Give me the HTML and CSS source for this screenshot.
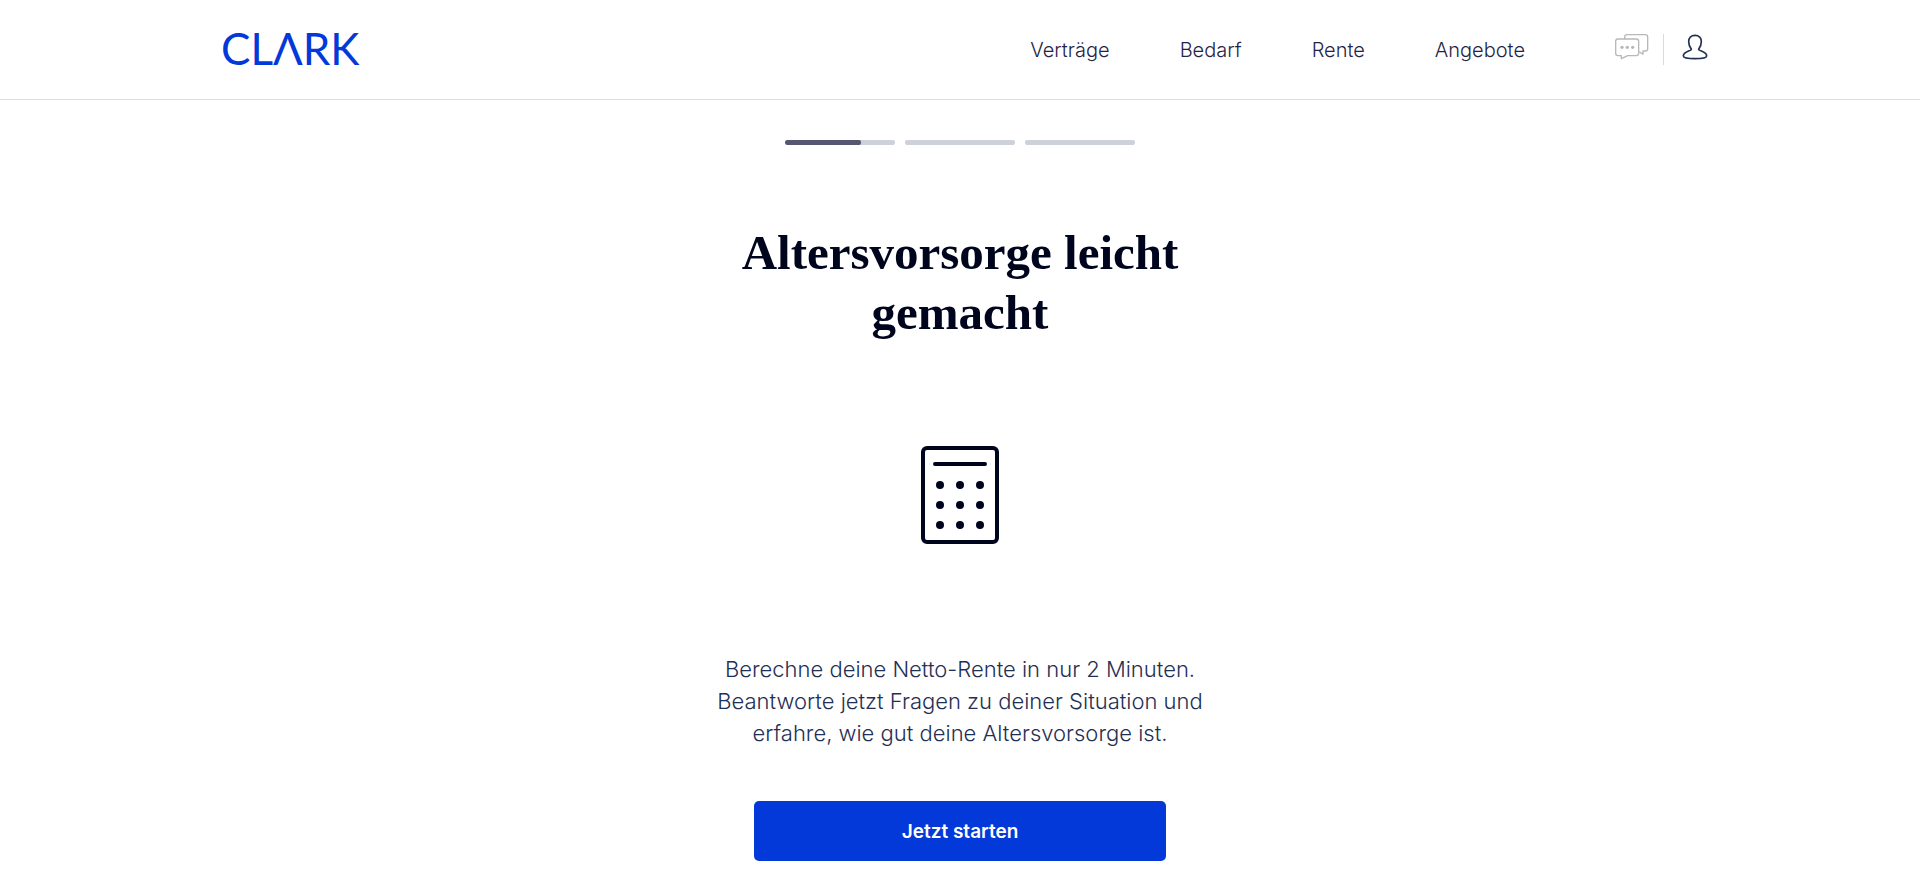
FILE: index.html
```html
<!DOCTYPE html>
<html lang="de">
<head>
<meta charset="utf-8">
<meta name="viewport" content="width=device-width, initial-scale=1">
<title>Altersvorsorge leicht gemacht</title>
<link rel="stylesheet" href="styles.css">
</head>
<body>
<header class="header">
  <div class="header-inner">
    <a class="logo" href="#" aria-label="Clark">CLΛRK</a>
    <nav class="nav">
      <a href="#">Verträge</a>
      <a href="#">Bedarf</a>
      <a href="#">Rente</a>
      <a href="#">Angebote</a>
    </nav>
    <div class="actions">
      <button class="icon-button chat" type="button" aria-label="Chat">
        <svg width="34" height="26" viewBox="0 0 102 78" fill="none" stroke="#b8b8b8" stroke-width="4" stroke-linejoin="round">
          <path d="M29 15V9Q29 2 36 2H91Q98 2 98 9V44Q98 51 91 51H84V61L73 53"/>
          <path d="M9 15H64Q71 15 71 22V58Q71 65 64 65H38L19 74V65H9Q2 65 2 58V22Q2 15 9 15Z"/>
          <g fill="#b8b8b8" stroke="none"><circle cx="21" cy="40" r="5"/><circle cx="37" cy="40" r="5"/><circle cx="53" cy="40" r="5"/></g>
        </svg>
      </button>
      <button class="icon-button user" type="button" aria-label="Konto">
        <svg width="26" height="26" viewBox="0 0 78 78" fill="none" stroke="#1f3054" stroke-width="5" stroke-linejoin="round">
          <path d="M39 4C27 4 20 12 20 23C20 34 24 40 28 46C27 52 4 51 4 66C4 71 19 74 39 74C59 74 74 71 74 66C74 51 51 52 50 46C54 40 58 34 58 23C58 12 51 4 39 4Z"/>
        </svg>
      </button>
    </div>
  </div>
</header>
<main class="main">
  <div class="progress" role="progressbar" aria-label="Fortschritt" aria-valuemin="0" aria-valuemax="100" aria-valuenow="23">
    <div class="step"><div class="step-fill" style="width:69%"></div></div>
    <div class="step"></div>
    <div class="step"></div>
  </div>
  <h1 class="title">Altersvorsorge leicht gemacht</h1>
  <svg class="calculator" width="80" height="100" viewBox="0 0 80 100" fill="#00051e" aria-hidden="true">
    <rect x="3" y="3" width="74" height="94" rx="4" fill="none" stroke="#00051e" stroke-width="4"/>
    <path d="M15 19H65" stroke="#00051e" stroke-width="4" stroke-linecap="round"/>
    <circle cx="20" cy="40" r="4"/><circle cx="40" cy="40" r="4"/><circle cx="60" cy="40" r="4"/>
    <circle cx="20" cy="60" r="4"/><circle cx="40" cy="60" r="4"/><circle cx="60" cy="60" r="4"/>
    <circle cx="20" cy="80" r="4"/><circle cx="40" cy="80" r="4"/><circle cx="60" cy="80" r="4"/>
  </svg>
  <p class="intro">Berechne deine Netto-Rente in nur 2 Minuten. Beantworte jetzt Fragen zu deiner Situation und erfahre, wie gut deine Altersvorsorge ist.</p>
  <button class="start" type="button">Jetzt starten</button>
</main>
</body>
</html>
```
FILE: styles.css
```css
* {
  box-sizing: border-box;
}

body {
  margin: 0;
  background: #fff;
  color: #1f3054;
  font-family: Inter, "Open Sans", sans-serif;
}

.header {
  border-bottom: 1px solid #dcdce6;
}

.header-inner {
  display: flex;
  align-items: center;
  max-width: 1520px;
  min-height: 99px;
  margin: 0 auto;
  padding: 0 12px 0 20px;
}

.logo {
  margin-right: auto;
  padding: 0 0 4px 1px;
  color: #0439d9;
  font-family: Lato, sans-serif;
  font-size: 44px;
  line-height: 48px;
  text-decoration: none;
}

.nav {
  display: flex;
  gap: 70px;
  margin-right: 90px;
}

.nav a {
  color: #1f2547;
  font-size: 20px;
  font-weight: 300;
  line-height: 24px;
  text-decoration: none;
}

.actions {
  display: flex;
  align-items: center;
}

.icon-button {
  display: flex;
  align-items: flex-start;
  height: 31px;
  padding: 0;
  border: 0;
  background: none;
  cursor: pointer;
}

.chat {
  padding-right: 14px;
}

.user {
  padding-left: 18px;
  border-left: 1px solid #d3daea;
}

.main {
  display: flex;
  flex-direction: column;
  align-items: center;
  padding: 40px 20px 26px;
}

.progress {
  display: flex;
  gap: 10px;
  width: 100%;
  max-width: 350px;
}

.step {
  flex: 1;
  height: 5px;
  border-radius: 2px;
  background: #cdd2da;
  overflow: hidden;
}

.step-fill {
  height: 100%;
  border-radius: 2px;
  background: #55566f;
}

.title {
  max-width: 500px;
  margin: 78px 0 102px;
  color: #00051e;
  font-family: "Liberation Serif", serif;
  font-size: 49px;
  font-weight: 700;
  line-height: 60px;
  text-align: center;
}

.intro {
  max-width: 512px;
  margin: 108px 0 52px;
  font-size: 22px;
  font-weight: 300;
  line-height: 32px;
  text-align: center;
}

.start {
  width: 100%;
  max-width: 412px;
  height: 60px;
  border: 0;
  border-radius: 5px;
  background: #0439d9;
  color: #fff;
  font-family: inherit;
  font-size: 19px;
  font-weight: 600;
  cursor: pointer;
}
```
